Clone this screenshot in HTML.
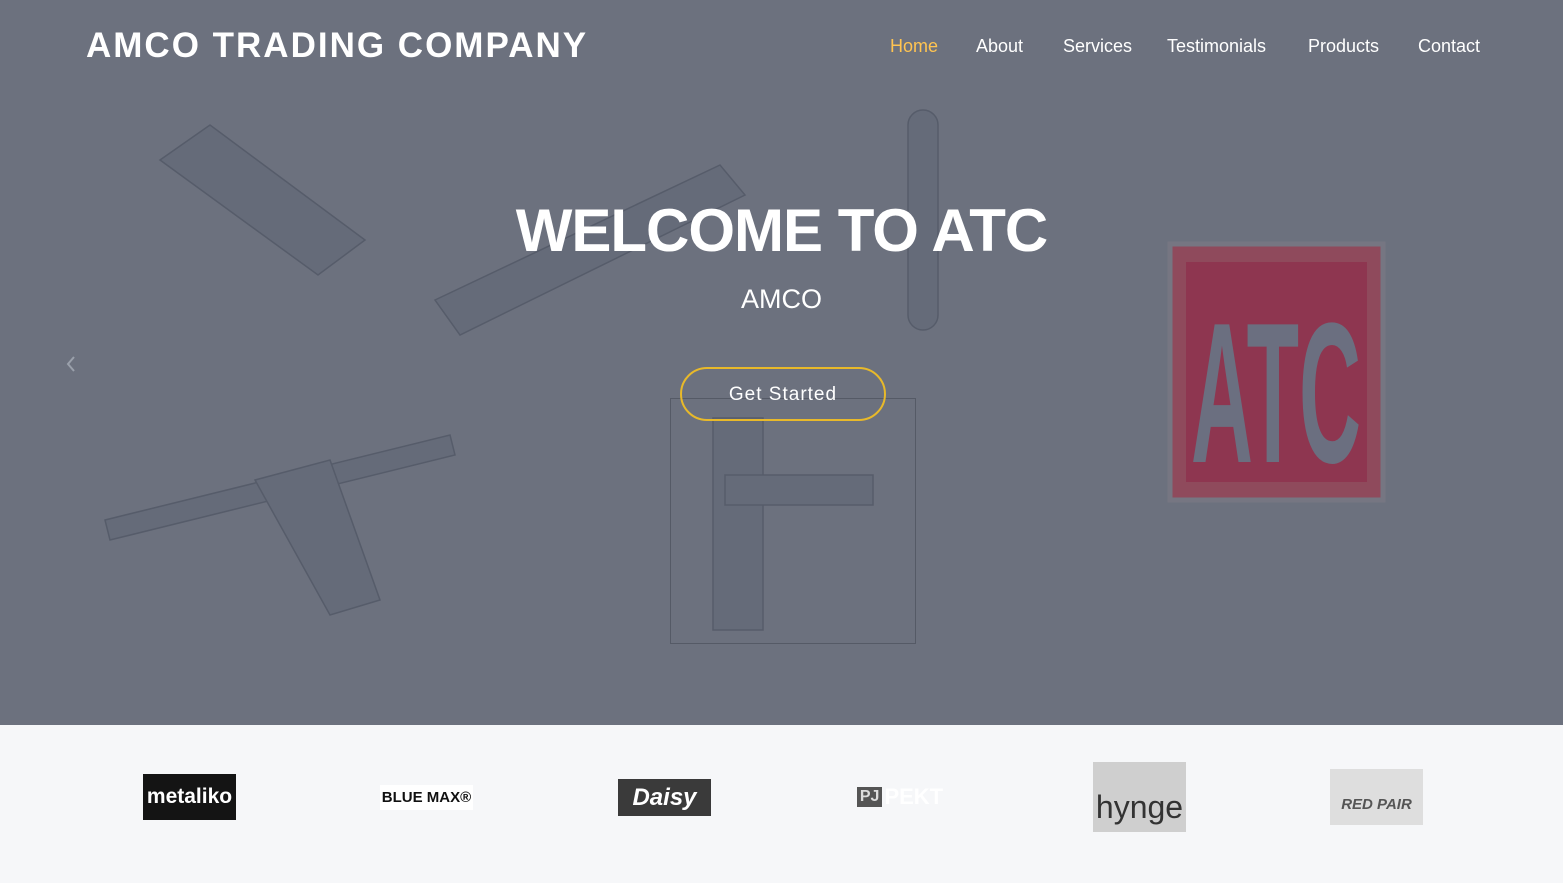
<!DOCTYPE html>
<html><head><meta charset="utf-8"><style>
*{margin:0;padding:0;box-sizing:border-box}
body{width:1563px;height:883px;overflow:hidden;background:#f6f7f9;font-family:"Liberation Sans",sans-serif}
#hero{position:absolute;left:0;top:0;width:1563px;height:725px;background:#6c717e;overflow:hidden}
.logo{position:absolute;left:86px;top:26px;color:#fff;font-size:35px;font-weight:bold;letter-spacing:2px}
nav{position:absolute;top:36px;left:890px;font-size:18px;color:#fff}
nav span{position:absolute;white-space:nowrap}
h1{position:absolute;left:0;width:1563px;top:196px;text-align:center;color:#fff;font-size:60px;font-weight:bold;letter-spacing:-1px}
.sub{position:absolute;width:1563px;top:284px;text-align:center;color:#fff;font-size:27px}
.btn{position:absolute;left:680px;top:367px;width:206px;height:54px;border:2px solid #e8b92a;border-radius:27px;color:#fff;font-size:19px;text-align:center;line-height:52px;letter-spacing:1px}
.brand{position:absolute;display:flex;align-items:center;justify-content:center}
</style></head><body>
<div id="hero">
<svg width="1563" height="725" style="position:absolute;left:0;top:0">
<g fill="#656b79" stroke="#565c6a" stroke-width="1.5">
<polygon points="160,160 210,125 365,240 318,275"/>
<polygon points="435,300 720,165 745,195 460,335"/>
<rect x="908" y="110" width="30" height="220" rx="15"/>
<polygon points="105,520 450,435 455,455 110,540"/>
<polygon points="255,480 330,460 380,600 330,615"/>
<rect x="713" y="418" width="50" height="212"/>
<rect x="725" y="475" width="148" height="30"/>
</g>
<rect x="670.5" y="398.5" width="245" height="245" fill="none" stroke="#555a66"/>
<rect x="1170" y="244" width="213" height="256" fill="#8f4a5c" stroke="#767682" stroke-width="5"/>
<rect x="1186" y="262" width="181" height="220" fill="#8e3650"/>
<text x="1276" y="462" text-anchor="middle" font-family="Liberation Sans" font-weight="bold" font-size="200" fill="#6b6f80" textLength="170" lengthAdjust="spacingAndGlyphs">ATC</text>
<path d="M74 357 L68 364 L74 371" stroke="#9aa0ab" stroke-width="2" fill="none"/>
</svg>
<div class="logo">AMCO TRADING COMPANY</div>
<nav><span style="left:0;color:#ffc451">Home</span><span style="left:86px">About</span><span style="left:173px">Services</span><span style="left:277px">Testimonials</span><span style="left:418px">Products</span><span style="left:528px">Contact</span></nav>
<h1>WELCOME TO ATC</h1>
<div class="sub">AMCO</div>
<div class="btn">Get Started</div>
</div>
<div class="brand" style="left:143px;top:774px;width:93px;height:46px;background:#141414;color:#fff;font-weight:bold;font-size:21px">metaliko</div>
<div class="brand" style="left:380px;top:785px;width:93px;height:25px;background:#fff;color:#111;font-size:15px;font-weight:bold;line-height:1">BLUE MAX®</div>
<div class="brand" style="left:618px;top:779px;width:93px;height:37px;background:#3a3a3a;color:#fff;font-style:italic;font-weight:bold;font-size:24px">Daisy</div>
<div class="brand" style="left:855px;top:784px;width:90px;height:26px;color:#fff;font-weight:bold;font-size:22px"><span style="background:#555;color:#ddd;font-size:16px;padding:1px 3px;margin-right:2px">PJ</span>PEKT</div>
<div class="brand" style="left:1093px;top:762px;width:93px;height:70px;background:#cfcfcf;color:#333;font-size:32px;padding-top:20px">hynge</div>
<div class="brand" style="left:1330px;top:769px;width:93px;height:56px;background:#dedede;color:#555;font-style:italic;font-weight:bold;font-size:15px;padding-top:14px">RED PAIR</div>
</body></html>
